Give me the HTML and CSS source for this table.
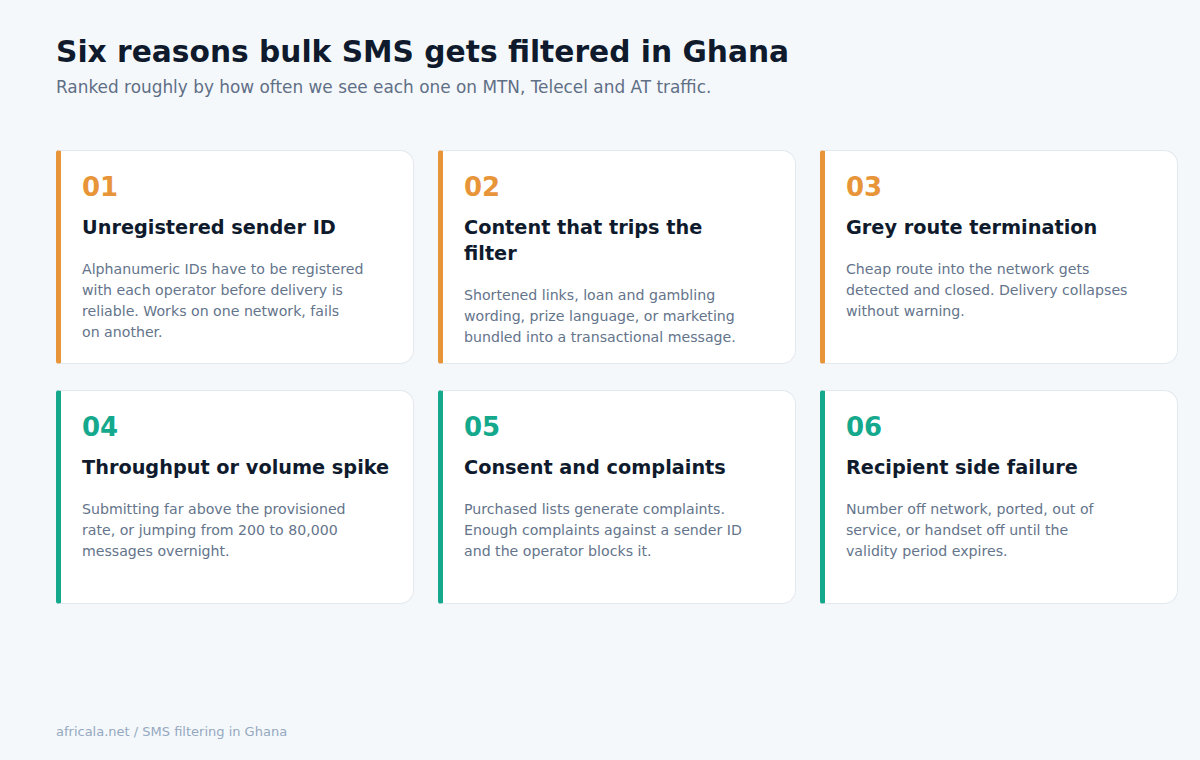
FILE: index.html
```html
<!DOCTYPE html>
<html lang="en">
<head>
<meta charset="utf-8">
<title>Six reasons bulk SMS gets filtered in Ghana</title>
<link rel="stylesheet" href="styles.css">
</head>
<body>
<div class="page">
  <header class="head">
    <h1 class="title">Six reasons bulk SMS gets filtered in Ghana</h1>
    <p class="sub">Ranked roughly by how often we see each one on MTN, Telecel and AT traffic.</p>
  </header>
  <main class="grid">
    <article class="card warn">
      <div class="num">01</div>
      <h2 class="card-title">Unregistered sender ID</h2>
      <p class="card-body">Alphanumeric IDs have to be registered with each operator before delivery is reliable. Works on one network, fails on another.</p>
    </article>
    <article class="card warn">
      <div class="num">02</div>
      <h2 class="card-title">Content that trips the<br>filter</h2>
      <p class="card-body">Shortened links, loan and gambling wording, prize language, or marketing bundled into a transactional message.</p>
    </article>
    <article class="card warn">
      <div class="num">03</div>
      <h2 class="card-title">Grey route termination</h2>
      <p class="card-body">Cheap route into the network gets detected and closed. Delivery collapses without warning.</p>
    </article>
    <article class="card ok">
      <div class="num">04</div>
      <h2 class="card-title">Throughput or volume spike</h2>
      <p class="card-body">Submitting far above the provisioned rate, or jumping from 200 to 80,000 messages overnight.</p>
    </article>
    <article class="card ok">
      <div class="num">05</div>
      <h2 class="card-title">Consent and complaints</h2>
      <p class="card-body">Purchased lists generate complaints. Enough complaints against a sender ID and the operator blocks it.</p>
    </article>
    <article class="card ok">
      <div class="num">06</div>
      <h2 class="card-title">Recipient side failure</h2>
      <p class="card-body">Number off network, ported, out of service, or handset off until the<br>validity period expires.</p>
    </article>
  </main>
  <footer class="foot">africala.net / SMS filtering in Ghana</footer>
</div>
</body>
</html>
```
FILE: styles.css
```css
* { box-sizing: border-box; }
html, body { margin: 0; padding: 0; }
body {
  background: #f5f8fb;
  font-family: "DejaVu Sans", sans-serif;
  color: #0f1b2d;
}
.page {
  min-height: 760px;
  display: flex;
  flex-direction: column;
  padding: 34px 22px 19px 56px;
}
.title {
  margin: 0;
  font-size: 29.7px;
  line-height: 36px;
  font-weight: 700;
  color: #0f1b2d;
}
.sub {
  margin: 5px 0 0;
  font-size: 16.9px;
  line-height: 25px;
  color: #5f6f86;
}
.grid {
  margin-top: 50px;
  display: grid;
  grid-template-columns: repeat(3, 358px);
  grid-auto-rows: 1fr;
  column-gap: 24px;
  row-gap: 26px;
}
.card {
  background: #ffffff;
  border: 1px solid #e3e8ef;
  border-left: 5px solid #e8953a;
  border-radius: 3px 14px 14px 3px;
  padding: 19px 16px 15px 21px;
}
.card.ok { border-left-color: #14a88c; }
.num {
  font-size: 26px;
  line-height: 34px;
  font-weight: 700;
  color: #e8953a;
}
.card.ok .num { color: #14a88c; }
.card-title {
  margin: 11px 0 0;
  font-size: 19.3px;
  line-height: 26px;
  font-weight: 700;
  color: #0f1b2d;
}
.card-body {
  margin: 18px 0 0;
  max-width: 292px;
  font-size: 14.15px;
  line-height: 21px;
  color: #64748b;
  text-wrap: pretty;
}
.foot {
  margin-top: auto;
  font-size: 13px;
  line-height: 18px;
  color: #94a8c0;
}
```
